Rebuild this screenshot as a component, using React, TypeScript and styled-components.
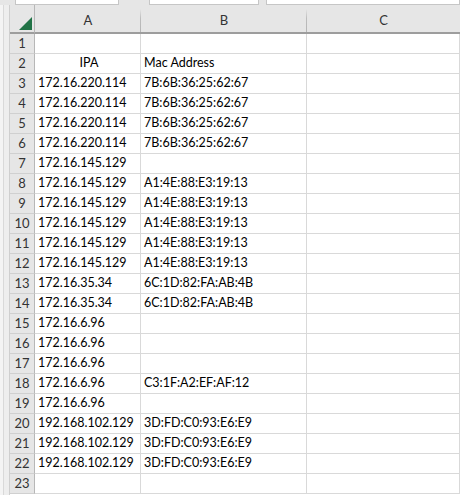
import { Fragment } from "react";
import styled, { createGlobalStyle } from "styled-components";

const GlobalStyle = createGlobalStyle`
  html, body {
    margin: 0;
    padding: 0;
    background: #e6e6e6;
  }
`;

const Window = styled.div`
  width: 460px;
  height: 495px;
  overflow: hidden;
  display: flex;
  flex-direction: column;
  background: #e6e6e6;
  font-family: "Lato", "Liberation Sans", sans-serif;
`;

const TopBar = styled.div`
  height: 5px;
  display: flex;
  gap: 30px;
  padding-left: 15px;
`;

const Field = styled.div<{ $w?: number; $gap?: number }>`
  height: 4px;
  background: #ffffff;
  border: 1px solid #c6c6c6;
  border-top: none;
  width: ${(p) => (p.$w ? `${p.$w}px` : "auto")};
  flex: ${(p) => (p.$w ? "none" : "1")};
  margin-left: ${(p) => (p.$gap !== undefined ? `${p.$gap - 30}px` : "0")};
`;

const Body = styled.div`
  flex: 1;
  display: flex;
`;

const Edge = styled.div`
  width: 10px;
  flex: none;
  background: #eeeeee;
  border-left: 3px solid #f4f4f4;
  box-sizing: border-box;
  box-shadow: inset 1px 0 0 #d9d9d9, inset -1px 0 0 #cfcfcf;
`;

const Sheet = styled.div`
  flex: 1;
  display: grid;
  grid-template-columns: 25px 106px 166px 1fr;
  grid-template-rows: 29px repeat(23, 20px);
  background: #ffffff;
  align-content: start;
`;

const Corner = styled.div`
  background: #e6e6e6;
  border-bottom: 2px solid #9d9d9d;
  border-right: 1px solid #b7b7b7;
  display: flex;
  align-items: flex-end;
  justify-content: flex-end;
  padding: 0 2px 2px 0;
`;

const ColHead = styled.div<{ $last?: boolean }>`
  position: relative;
  background: #e6e6e6;
  border-bottom: 2px solid #9d9d9d;
  display: flex;
  align-items: flex-end;
  justify-content: center;
  padding-bottom: 4px;
  font-size: 13px;
  color: #333333;
  &::after {
    content: "";
    display: ${(p) => (p.$last ? "none" : "block")};
    position: absolute;
    right: 0;
    top: 4px;
    bottom: 0;
    width: 1px;
    background: linear-gradient(#e6e6e6, #bdbdbd 40%, #b5b5b5);
  }
`;

const RowHead = styled.div`
  background: #e6e6e6;
  border-right: 1px solid #b7b7b7;
  border-bottom: 1px solid #d0d0d0;
  display: flex;
  align-items: flex-end;
  justify-content: center;
  padding-bottom: 2px;
  font-size: 13px;
  color: #333333;
`;

const Cell = styled.div<{ $center?: boolean }>`
  border-right: 1px solid #d9d9d9;
  border-bottom: 1px solid #d9d9d9;
  display: flex;
  align-items: flex-end;
  justify-content: ${(p) => (p.$center ? "center" : "flex-start")};
  padding: 0 0 2px 3px;
  font-size: 12.5px;
  color: #000000;
  white-space: nowrap;
  overflow: hidden;
  line-height: 16px;
`;

const rows: [string, string, boolean?][] = [
  ["", ""],
  ["IPA", "Mac Address", true],
  ["172.16.220.114", "7B:6B:36:25:62:67"],
  ["172.16.220.114", "7B:6B:36:25:62:67"],
  ["172.16.220.114", "7B:6B:36:25:62:67"],
  ["172.16.220.114", "7B:6B:36:25:62:67"],
  ["172.16.145.129", ""],
  ["172.16.145.129", "A1:4E:88:E3:19:13"],
  ["172.16.145.129", "A1:4E:88:E3:19:13"],
  ["172.16.145.129", "A1:4E:88:E3:19:13"],
  ["172.16.145.129", "A1:4E:88:E3:19:13"],
  ["172.16.145.129", "A1:4E:88:E3:19:13"],
  ["172.16.35.34", "6C:1D:82:FA:AB:4B"],
  ["172.16.35.34", "6C:1D:82:FA:AB:4B"],
  ["172.16.6.96", ""],
  ["172.16.6.96", ""],
  ["172.16.6.96", ""],
  ["172.16.6.96", "C3:1F:A2:EF:AF:12"],
  ["172.16.6.96", ""],
  ["192.168.102.129", "3D:FD:C0:93:E6:E9"],
  ["192.168.102.129", "3D:FD:C0:93:E6:E9"],
  ["192.168.102.129", "3D:FD:C0:93:E6:E9"],
  ["", ""],
];

const App = () => {
  return (
    <Window>
      <GlobalStyle />
      <TopBar>
        <Field $w={102} />
        <Field $w={108} />
        <Field $gap={7} />
      </TopBar>
      <Body>
        <Edge />
        <Sheet>
          <Corner>
            <svg width="13" height="13" viewBox="0 0 13 13">
              <polygon points="13,0 13,13 0,13" fill="#217346" />
            </svg>
          </Corner>
          <ColHead>A</ColHead>
          <ColHead>B</ColHead>
          <ColHead $last>C</ColHead>
          {rows.map(([ip, mac, center], i) => (
            <Fragment key={i}>
              <RowHead>{i + 1}</RowHead>
              <Cell $center={center}>{ip}</Cell>
              <Cell>{mac}</Cell>
              <Cell />
            </Fragment>
          ))}
        </Sheet>
      </Body>
    </Window>
  );
};

export default App;
